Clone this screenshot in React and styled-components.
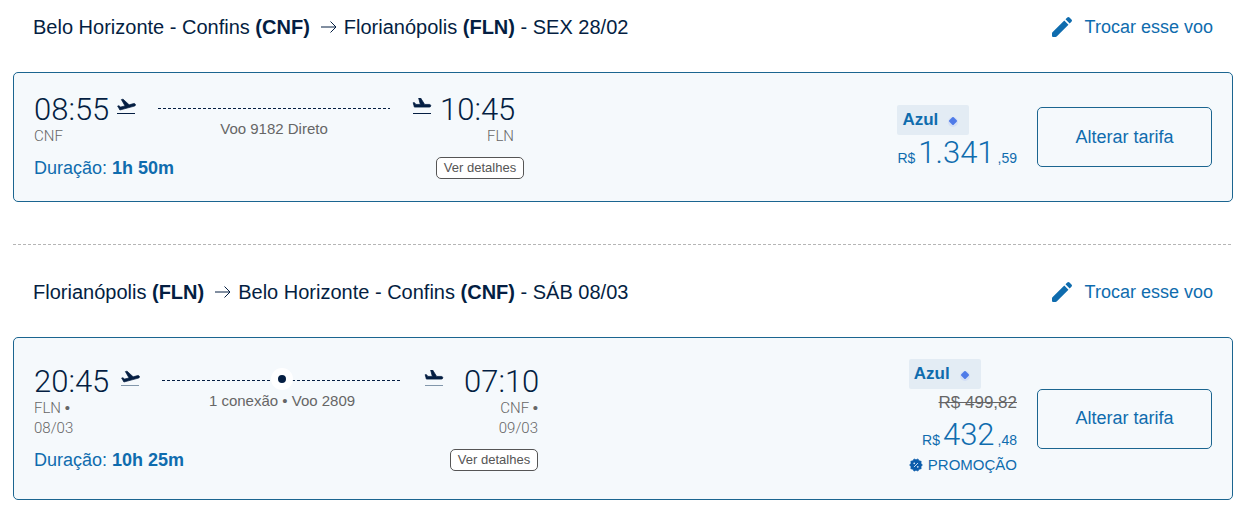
import React from "react";
import styled, { createGlobalStyle } from "styled-components";

const navy = "#041e42";
const blue = "#0f6cae";
const line = "#1b6590";
const grey = "#666";
const sans = '"Liberation Sans", Arial, sans-serif';
const light = 'Roboto, "Liberation Sans", sans-serif';

const GlobalStyle = createGlobalStyle`
  * { box-sizing: border-box; }
  body { margin: 0; background: #fff; color: ${navy}; font-family: ${sans}; }
  button { font-family: inherit; cursor: pointer; }
`;

const Page = styled.main`
  padding: 0 10px 12px 13px;
`;

const Header = styled.header`
  display: flex;
  justify-content: space-between;
  align-items: center;
  padding: 15px 20px 33px;
`;

const Route = styled.h2`
  display: flex;
  align-items: center;
  margin: 0;
  font-size: 20px;
  line-height: 24px;
  font-weight: 400;
  white-space: pre;
`;

const RouteArrow = styled.svg`
  width: 16px;
  height: 14px;
  margin: 0 7px 0 11px;
`;

const SwapLink = styled.a`
  display: flex;
  align-items: center;
  gap: 13px;
  color: ${blue};
  font-size: 18px;
  line-height: 24px;
  text-decoration: none;
`;

const Card = styled.article`
  display: flex;
  align-items: center;
  padding: 21px 20px;
  border: 1px solid ${line};
  border-radius: 5px;
  background: #f5f9fc;
`;

const Itinerary = styled.div`
  display: flex;
  flex-direction: column;
  gap: 10px;
`;

const Legs = styled.div`
  display: flex;
  align-items: flex-start;
  padding-right: ${(p) => (p.$wide ? 0 : 10)}px;
`;

const Stop = styled.div`
  width: 74px;
  text-align: ${(p) => p.$align || "left"};
`;

const Time = styled.div`
  font-family: ${light};
  font-weight: 300;
  font-size: 31px;
  line-height: 32px;
`;

const Airport = styled.div`
  height: 20px;
  color: ${grey};
  font-family: ${light};
  font-weight: 300;
  font-size: 15px;
  line-height: 20px;
`;

const Bullet = styled.span`
  font-family: ${sans};
  font-weight: 400;
`;

const Plane = styled.svg`
  width: 20px;
  height: 17px;
  margin-top: 4px;
  margin-left: ${(p) => (p.$arrive ? 22 : p.$wide ? 12 : 8)}px;
  margin-right: ${(p) => (p.$arrive ? (p.$wide ? 20 : 8) : 22)}px;
`;

const Path = styled.div`
  width: ${(p) => (p.$wide ? 240 : 232)}px;
  padding-top: 14px;
`;

const DashedLine = styled.div`
  position: relative;
  height: 1px;
  background: repeating-linear-gradient(90deg, ${navy} 0 3px, transparent 3px 5px);
`;

const ConnectionDot = styled.span`
  position: absolute;
  left: 50%;
  top: 50%;
  width: 22px;
  height: 22px;
  margin: -12px 0 0 -11px;
  border: 7px solid #fff;
  border-radius: 50%;
  background: ${navy};
`;

const FlightInfo = styled.div`
  margin-top: 10px;
  color: ${grey};
  font-size: 15px;
  line-height: 20px;
  text-align: center;
`;

const Summary = styled.div`
  display: flex;
  justify-content: space-between;
  align-items: center;
  height: 24px;
`;

const Duration = styled.div`
  color: ${blue};
  font-size: 18px;
  line-height: 24px;
`;

const DetailsButton = styled.button`
  width: 88px;
  height: 22px;
  padding: 0;
  border: 1px solid #555;
  border-radius: 5px;
  background: #fff;
  color: #555;
  font-size: 13px;
  line-height: 20px;
`;

const Fare = styled.div`
  display: flex;
  flex-direction: column;
  align-items: flex-end;
  margin-left: auto;
  margin-right: 20px;
  color: ${blue};
`;

const FareBadge = styled.div`
  display: flex;
  align-items: center;
  align-self: flex-start;
  gap: 8px;
  width: 72px;
  height: 30px;
  padding: 0 5px;
  border-radius: 2px;
  background: #e3ecf4;
  font-size: 17px;
  font-weight: 700;
`;

const OldPrice = styled.s`
  color: ${grey};
  font-size: 17px;
  line-height: 28px;
`;

const Price = styled.div`
  display: flex;
  align-items: baseline;
  gap: 3px;
  height: 34px;
  font-size: 14px;
  line-height: 36px;
`;

const Amount = styled.span`
  font-family: ${light};
  font-weight: 300;
  font-size: 31px;
`;

const Promo = styled.div`
  display: flex;
  align-items: center;
  gap: 5px;
  font-size: 15px;
  line-height: 27px;
`;

const FareButton = styled.button`
  width: 175px;
  height: 60px;
  padding: 0;
  border: 1px solid ${line};
  border-radius: 5px;
  background: transparent;
  color: ${blue};
  font-size: 18px;
`;

const Divider = styled.hr`
  height: 1px;
  margin: 42px 0 20px;
  border: 0;
  background: repeating-linear-gradient(90deg, #b5b5b5 0 3px, transparent 3px 5px);
`;

function PlaneIcon({ arrive, wide }) {
  return (
    <Plane viewBox="0 0 20 17" $arrive={arrive} $wide={wide} aria-hidden="true">
      <path
        transform={arrive ? "translate(-1 -3) rotate(15 11 11) scale(.88)" : "translate(0 -2) scale(.88)"}
        fill={navy}
        stroke={navy}
        strokeWidth=".8"
        strokeLinejoin="round"
        d="M22.07 9.64c-.21-.8-1.04-1.28-1.84-1.06L14.92 10l-6.9-6.43-1.93.51 4.14 7.17-4.97 1.33-1.97-1.54-1.45.39 1.82 3.16.77 1.33 16.58-4.44c.81-.23 1.28-1.05 1.06-1.84z"
      />
      <path d="M1 15.5h18" stroke={wide ? "#8297ab" : navy} />
    </Plane>
  );
}

function PencilIcon() {
  return (
    <svg width="20" height="20" viewBox="3 3 18 18" fill={blue} aria-hidden="true">
      <path d="M3.400 16.800Q3 17.200 3 17.800V20q0 1 1 1h2.200q.6 0 1-.4L17.81 9.940l-3.750-3.750zM20.500 7.250q1-1 0-2l-1.750-1.750q-1-1-2 0l-1.620 1.620 3.750 3.750z" />
    </svg>
  );
}

function DiamondIcon() {
  return (
    <svg width="14" height="16" viewBox="0 0 14 16" aria-hidden="true">
      <circle cx="7" cy="10" r="5" fill="#d3dff5" />
      <path
        d="M7 6l3 3-3 3-3-3z"
        fill="#4f7be8"
        stroke="#4f7be8"
        strokeWidth="2"
        strokeLinejoin="round"
      />
    </svg>
  );
}

function PromoIcon() {
  return (
    <svg width="14" height="14" viewBox="0 0 24 24" aria-hidden="true">
      <path
        fill="#0b5cab"
        stroke="#0b5cab"
        strokeLinejoin="round"
        d="M23 12l-2.44-2.79.34-3.69-3.61-.82-1.89-3.2L12 2.96 8.6 1.5 6.71 4.69 3.1 5.5l.34 3.7L1 12l2.44 2.79-.34 3.7 3.61.82L8.6 22.5l3.4-1.47 3.4 1.46 1.89-3.19 3.61-.82-.34-3.69z"
      />
      <path d="M8.500 15.500l7-7" stroke="#d6e6f6" strokeWidth="1.600" />
      <circle cx="9" cy="9" r="1.500" fill="#d6e6f6" />
      <circle cx="15" cy="15" r="1.500" fill="#d6e6f6" />
    </svg>
  );
}

function StopInfo({ time, code, date, align }) {
  return (
    <Stop $align={align}>
      <Time>{time}</Time>
      <Airport>{code}{date && <> <Bullet>•</Bullet></>}</Airport>
      {date && <Airport>{date}</Airport>}
    </Stop>
  );
}

function Flight({ from, to, date, depart, arrive, info, duration, fare, wide }) {
  return (
    <section>
      <Header>
        <Route>
          {from.city} <b>({from.code})</b>
          <RouteArrow viewBox="0 0 16 14" fill="none" stroke={navy} aria-hidden="true">
            <path d="M0 7h15M9.500 1.500L15 7l-5.500 5.500" />
          </RouteArrow>
          {to.city} <b>({to.code})</b> - {date}
        </Route>
        <SwapLink href="#trocar">
          <PencilIcon />
          Trocar esse voo
        </SwapLink>
      </Header>
      <Card>
        <Itinerary>
          <Legs $wide={wide}>
            <StopInfo code={from.code} {...depart} />
            <PlaneIcon wide={wide} />
            <Path $wide={wide}>
              <DashedLine>{wide && <ConnectionDot />}</DashedLine>
              <FlightInfo>{info}</FlightInfo>
            </Path>
            <PlaneIcon arrive wide={wide} />
            <StopInfo code={to.code} align="right" {...arrive} />
          </Legs>
          <Summary>
            <Duration>Duração: <b>{duration}</b></Duration>
            <DetailsButton type="button">Ver detalhes</DetailsButton>
          </Summary>
        </Itinerary>
        <Fare>
          <FareBadge>Azul <DiamondIcon /></FareBadge>
          {fare.old && <OldPrice>{fare.old}</OldPrice>}
          <Price>R$<Amount>{fare.whole}</Amount> ,{fare.cents}</Price>
          {fare.old && <Promo><PromoIcon />PROMOÇÃO</Promo>}
        </Fare>
        <FareButton type="button">Alterar tarifa</FareButton>
      </Card>
    </section>
  );
}

const CNF = { city: "Belo Horizonte - Confins", code: "CNF" };
const FLN = { city: "Florianópolis", code: "FLN" };

export default function App() {
  return (
    <Page>
      <GlobalStyle />
      <Flight
        from={CNF}
        to={FLN}
        date="SEX 28/02"
        depart={{ time: "08:55" }}
        arrive={{ time: "10:45" }}
        info="Voo 9182 Direto"
        duration="1h 50m"
        fare={{ whole: "1.341", cents: "59" }}
      />
      <Divider />
      <Flight
        wide
        from={FLN}
        to={CNF}
        date="SÁB 08/03"
        depart={{ time: "20:45", date: "08/03" }}
        arrive={{ time: "07:10", date: "09/03" }}
        info="1 conexão • Voo 2809"
        duration="10h 25m"
        fare={{ old: "R$ 499,82", whole: "432", cents: "48" }}
      />
    </Page>
  );
}
